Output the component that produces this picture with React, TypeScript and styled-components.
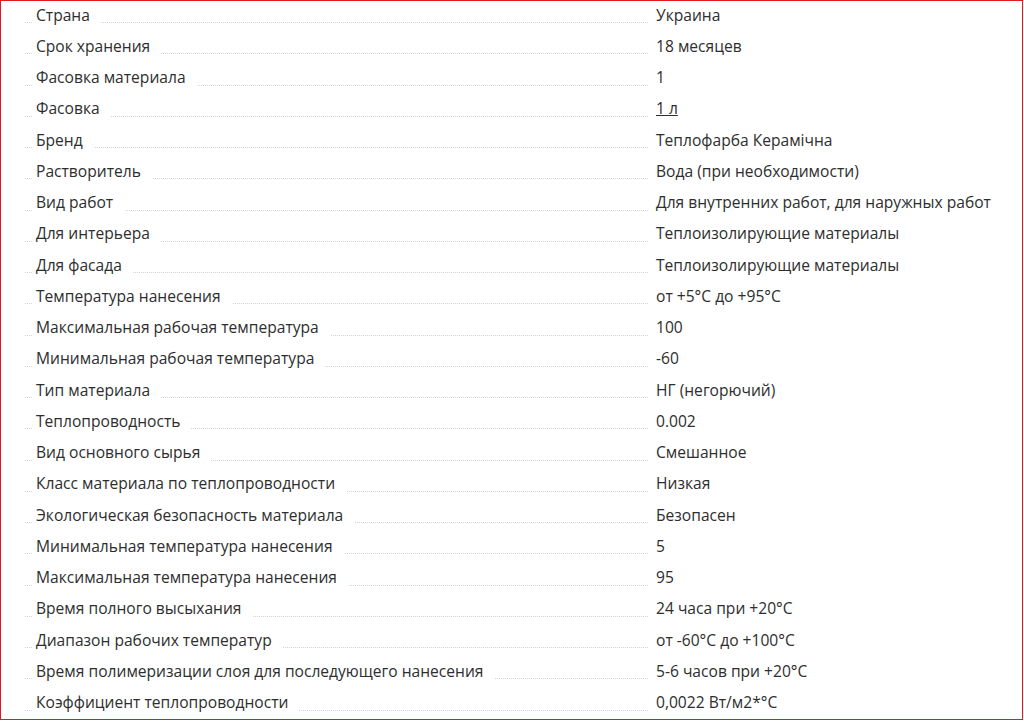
import React from 'react';
import styled, { createGlobalStyle } from 'styled-components';

const GlobalStyle = createGlobalStyle`
    html, body {
        margin: 0;
        padding: 0;
        background: #fff;
    }
    body {
        font-family: "Open Sans", "Liberation Sans", sans-serif;
        color: #2e2e2e;
    }
`;

const Frame = styled.div`
    box-sizing: border-box;
    width: 1023px;
    height: 720px;
    border: 1px solid #e3171f;
    overflow: hidden;
`;

const SpecList = styled.div`
    display: grid;
    grid-template-columns: 623px 1fr;
    grid-auto-rows: 31.25px;
    column-gap: 8px;
    padding-left: 24px;
`;

const LabelCell = styled.div`
    padding-top: 3.5px;
    font-size: 15.6px;
    line-height: 21px;
    background-image: linear-gradient(to right, #d4d4d4 50%, transparent 50%);
    background-size: 2px 1px;
    background-repeat: repeat-x;
    background-position: 0 21px;
`;

const LabelText = styled.span`
    display: inline-block;
    background: #fff;
    margin-left: 8px;
    padding: 0 11px 0 3px;
    height: 23px;
    white-space: nowrap;
`;

const ValueCell = styled.div`
    padding-top: 3.5px;
    font-size: 15.6px;
    line-height: 21px;
    white-space: nowrap;
`;

const ValueLink = styled.a`
    color: inherit;
    text-decoration: underline;
`;

type Spec = {
    label: string;
    value: string;
    link?: boolean;
};

const specs: Spec[] = [
    { label: 'Страна', value: 'Украина' },
    { label: 'Срок хранения', value: '18 месяцев' },
    { label: 'Фасовка материала', value: '1' },
    { label: 'Фасовка', value: '1 л', link: true },
    { label: 'Бренд', value: 'Теплофарба Керамічна' },
    { label: 'Растворитель', value: 'Вода (при необходимости)' },
    { label: 'Вид работ', value: 'Для внутренних работ, для наружных работ' },
    { label: 'Для интерьера', value: 'Теплоизолирующие материалы' },
    { label: 'Для фасада', value: 'Теплоизолирующие материалы' },
    { label: 'Температура нанесения', value: 'от +5°С до +95°С' },
    { label: 'Максимальная рабочая температура', value: '100' },
    { label: 'Минимальная рабочая температура', value: '-60' },
    { label: 'Тип материала', value: 'НГ (негорючий)' },
    { label: 'Теплопроводность', value: '0.002' },
    { label: 'Вид основного сырья', value: 'Смешанное' },
    { label: 'Класс материала по теплопроводности', value: 'Низкая' },
    { label: 'Экологическая безопасность материала', value: 'Безопасен' },
    { label: 'Минимальная температура нанесения', value: '5' },
    { label: 'Максимальная температура нанесения', value: '95' },
    { label: 'Время полного высыхания', value: '24 часа при +20°С' },
    { label: 'Диапазон рабочих температур', value: 'от -60°С до +100°С' },
    { label: 'Время полимеризации слоя для последующего нанесения', value: '5-6 часов при +20°С' },
    { label: 'Коэффициент теплопроводности', value: '0,0022 Вт/м2*°С' },
];

const App: React.FC = () => {
    return (
        <>
            <GlobalStyle />
            <Frame>
                <SpecList>
                    {specs.map((spec) => (
                        <React.Fragment key={spec.label}>
                            <LabelCell>
                                <LabelText>{spec.label}</LabelText>
                            </LabelCell>
                            <ValueCell>
                                {spec.link ? (
                                    <ValueLink href="#">{spec.value}</ValueLink>
                                ) : (
                                    spec.value
                                )}
                            </ValueCell>
                        </React.Fragment>
                    ))}
                </SpecList>
            </Frame>
        </>
    );
};

export default App;
